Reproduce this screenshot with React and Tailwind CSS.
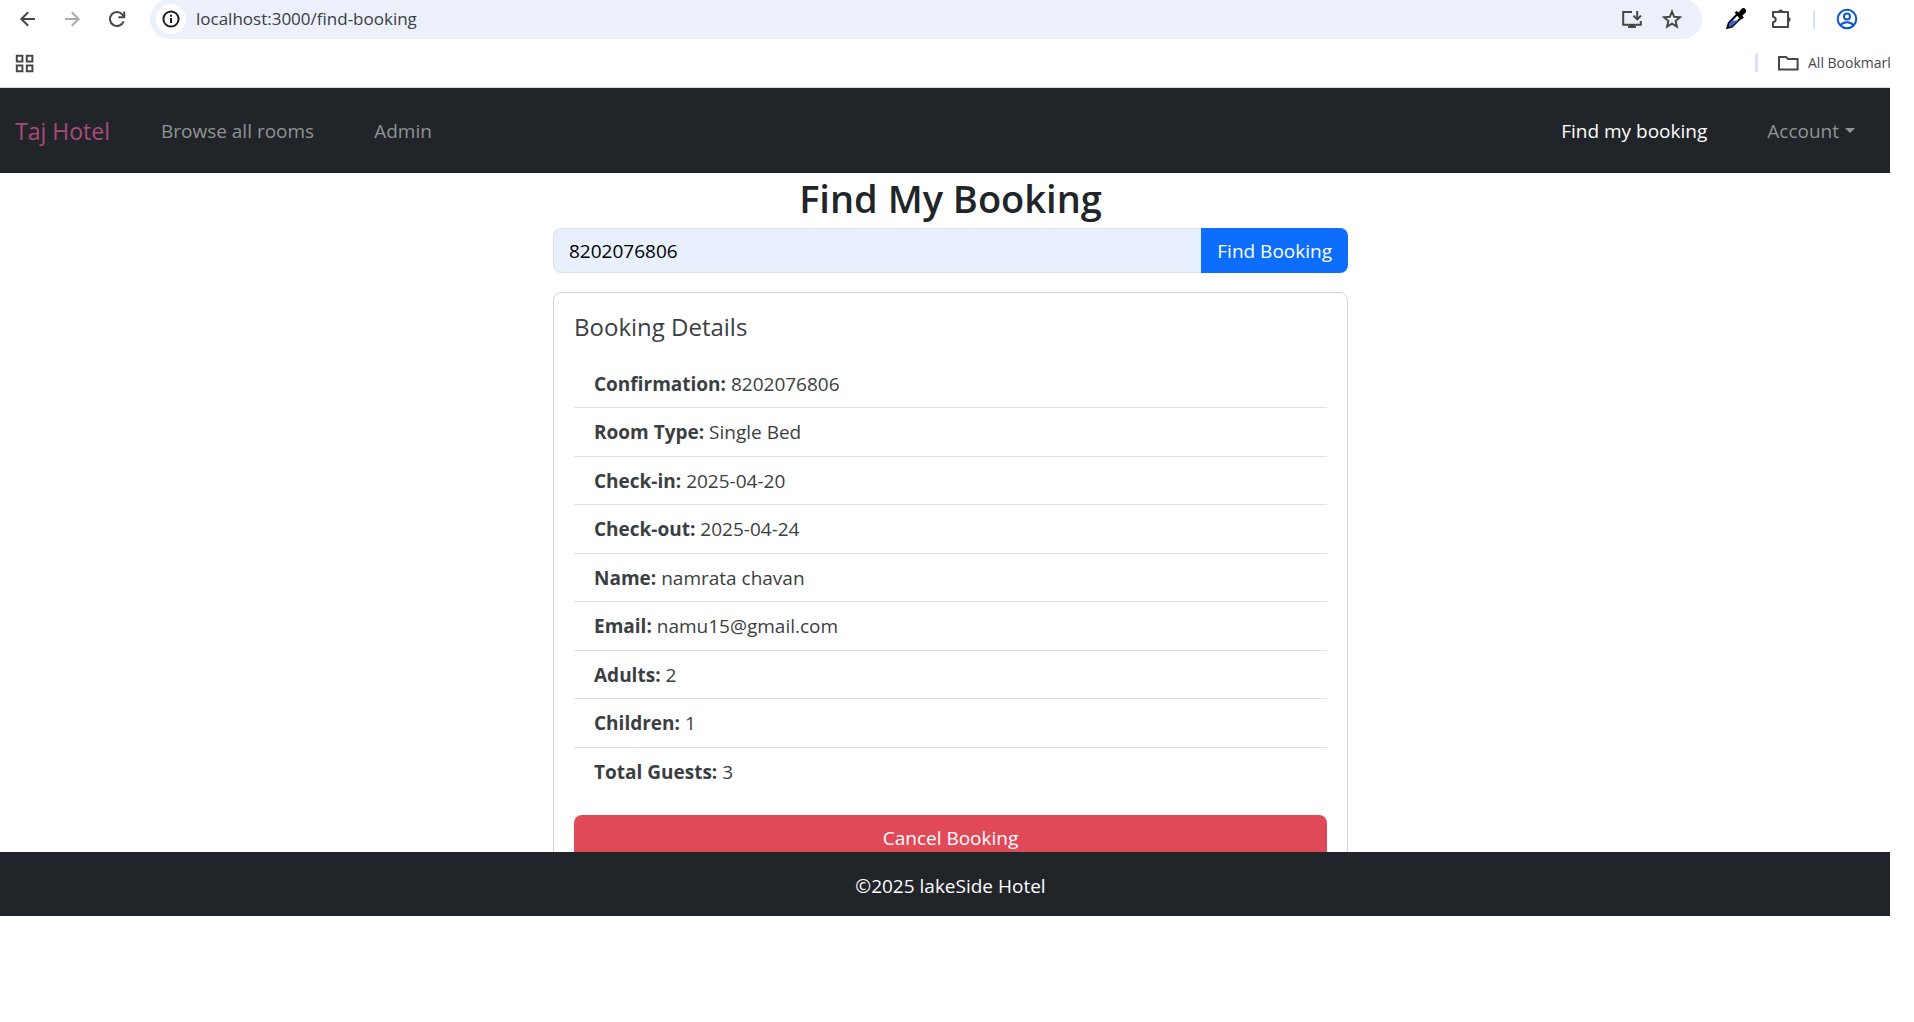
import React from "react";

const details = [
  ["Confirmation", "8202076806"],
  ["Room Type", "Single Bed"],
  ["Check-in", "2025-04-20"],
  ["Check-out", "2025-04-24"],
  ["Name", "namrata chavan"],
  ["Email", "namu15@gmail.com"],
  ["Adults", "2"],
  ["Children", "1"],
  ["Total Guests", "3"],
];

function Icon({ size = 24, stroke = 2, className = "", children }) {
  return (
    <svg
      width={size}
      height={size}
      viewBox={`0 0 ${size} ${size}`}
      fill="none"
      stroke="currentColor"
      strokeWidth={stroke}
      className={className}
      aria-hidden="true"
    >
      {children}
    </svg>
  );
}

function Toolbar() {
  return (
    <div className="flex h-[38px] items-center pl-4 text-[#474747]">
      <button aria-label="Back">
        <Icon>
          <path d="M19 12H6M12.2 5.2 5.4 12l6.8 6.8" />
        </Icon>
      </button>
      <button aria-label="Forward" className="ml-5 text-[#ababab]">
        <Icon>
          <path d="M5 12h13M11.8 5.2l6.8 6.8-6.8 6.8" />
        </Icon>
      </button>
      <button aria-label="Reload" className="ml-5">
        <Icon size={26}>
          <path d="M19.6 15.2a7 7 0 1 1-1.2-6.6l1.2 1.6" />
          <path d="M20.2 5.5v5.7h-5.8" />
        </Icon>
      </button>
      <div className="ml-5 flex h-10 min-w-0 flex-1 items-center rounded-full bg-[#ebf0fa] pl-1.5 pr-[18px]">
        <button
          aria-label="Site information"
          className="flex size-[30px] shrink-0 items-center justify-center rounded-full bg-white text-[#1f1f1f]"
        >
          <Icon size={20}>
            <circle cx="10" cy="10" r="7.6" />
            <path d="M10 9v5M10 5.8v2" />
          </Icon>
        </button>
        <input
          aria-label="Address"
          defaultValue="localhost:3000/find-booking"
          className="ml-2.5 min-w-0 flex-1 bg-transparent text-[17px] leading-6 text-[#3c3d40] outline-none"
        />
        <button aria-label="Install app">
          <Icon>
            <path d="M12 5H3.2v12.8h17.6V14M8 20h8" />
            <path d="M17.2 4v8M13.4 8.6l3.8 3.8 3.8-3.8" />
            <path d="M9 18.6h6" strokeWidth="3" />
          </Icon>
        </button>
        <button aria-label="Bookmark this page" className="ml-4">
          <Icon>
            <path d="m12 4.6 2.2 5.2 5.7.5-4.3 3.7 1.3 5.6-4.9-3-4.9 3 1.3-5.6-4.3-3.7 5.7-.5z" />
          </Icon>
        </button>
      </div>
      <button aria-label="Color picker" className="ml-[22px]">
        <Icon>
          <path d="M13.2 7.2 4.8 16l-1.4 4.8 4.6-1.2 8.8-8.6z" fill="#fff" stroke="#000" />
          <path d="m7.6 13.4 6.6.2-6.8 6-2.8.2.6-3.4z" fill="#3f5fd0" stroke="none" />
          <path d="M10.6 5.8 12.6 4l2 1.4 2.6-3.2c1.2-1.4 3-1.4 4.2-.2 1 1.2 1 2.8-.2 4l-2.8 2.6 1.4 2-2 2z" fill="#000" stroke="none" />
        </Icon>
      </button>
      <button aria-label="Extensions" className="ml-[21px]">
        <Icon>
          <path d="M4 5h15v15H4v-4.8c3.6-.6 3.6-4.8 0-5.4z" strokeLinejoin="round" />
          <path d="M9 5a2.6 2.6 0 0 1 5.2 0zM19 10a2.6 2.6 0 0 1 0 5.2z" fill="currentColor" stroke="none" />
        </Icon>
      </button>
      <span className="ml-5 h-[19px] w-0.5 rounded bg-[#d3e3fd]" />
      <button aria-label="Profile" className="ml-5 mr-[31px] text-[#0b57d0]">
        <Icon>
          <circle cx="12" cy="12" r="9.3" />
          <circle cx="12" cy="9.5" r="3" />
          <path d="M5.4 18.2c3.6-3.8 9.6-3.8 13.2 0" />
        </Icon>
      </button>
    </div>
  );
}

function BookmarksBar() {
  return (
    <div className="flex h-[50px] items-center justify-between border-b border-[#dcdcdc] pl-3 text-[#474747]">
      <button aria-label="Apps">
        <Icon>
          <path d="M4.8 4.8h5.6v5.6H4.8zM14.8 4.8h5.6v5.6h-5.6zM4.8 14.6h5.6v5.6H4.8zM14.8 14.6h5.6v5.6h-5.6z" />
        </Icon>
      </button>
      <div className="flex w-[135px] shrink-0 items-center">
        <span className="h-[19px] w-[3px] shrink-0 rounded bg-[#d3e3fd]" />
        <button className="ml-[18px] flex items-center whitespace-nowrap text-sm leading-5">
          <Icon className="mr-2 shrink-0">
            <path d="M3 6v12.6h18.6V8H12L10 6z" />
          </Icon>
          All Bookmarks
        </button>
      </div>
    </div>
  );
}

function Navbar() {
  return (
    <nav className="flex h-[85px] items-center bg-[#212529] pl-[15px] pr-[46px] text-[19px] leading-7 text-[#919395]">
      <a href="#home" className="text-[23px] leading-8 text-[#aa4a7b]">Taj Hotel</a>
      <div className="ml-[51px] flex flex-1 gap-[60px]">
        <a href="#rooms">Browse all rooms</a>
        <a href="#admin">Admin</a>
      </div>
      <div className="flex gap-[60px]">
        <a href="#find" className="text-white">Find my booking</a>
        <button className="flex items-center gap-1.5">
          Account
          <span className="border-x-[5px] border-t-[5px] border-x-transparent border-t-current" />
        </button>
      </div>
    </nav>
  );
}

export default function App() {
  return (
    <div className="flex h-screen flex-col overflow-hidden bg-white pr-6 pb-[106px] font-['Open_Sans','Noto_Sans',sans-serif]">
      <header className="shrink-0 overflow-hidden">
        <Toolbar />
        <BookmarksBar />
      </header>
      <div className="relative min-h-0 flex-1 overflow-hidden">
        <div className="-mr-[11px]">
          <Navbar />
          <main className="mx-auto w-full max-w-[795px] text-[19px] leading-7 text-[#3b3e42]">
            <h1 className="pt-1 text-center text-[38px] leading-[42px] font-semibold text-[#212529]">
              Find My Booking
            </h1>
            <form className="mt-[9px] flex h-[45px]" onSubmit={(e) => e.preventDefault()}>
              <input
                aria-label="Confirmation code"
                defaultValue="8202076806"
                className="min-w-0 flex-1 rounded-l-lg border border-r-0 border-[#dee2e6] bg-[#e8effd] px-[15px] text-black outline-none"
              />
              <button className="rounded-r-lg bg-[#0d6efd] px-4 text-white">Find Booking</button>
            </form>
            <section className="mt-[19px] rounded-lg border border-[#d5d6d7] p-5">
              <h2 className="text-2xl leading-7 font-medium">Booking Details</h2>
              <ul className="mt-[19px]">
                {details.map(([label, value]) => (
                  <li
                    key={label}
                    className="border-b border-[#dfe1e3] px-5 pt-2.5 pb-2.5 leading-7 last:border-b-0 odd:pb-[9px]"
                  >
                    <strong className="font-bold">{label}:</strong> {value}
                  </li>
                ))}
              </ul>
              <button className="mt-5 h-[45px] w-full rounded-lg bg-[#e04958] text-white">
                Cancel Booking
              </button>
            </section>
          </main>
          <footer className="absolute bottom-0 left-0 -right-[11px] flex h-16 items-center justify-center bg-[#212529] pt-1 text-[19px] leading-7 text-white">
            ©2025 lakeSide Hotel
          </footer>
        </div>
      </div>
    </div>
  );
}
